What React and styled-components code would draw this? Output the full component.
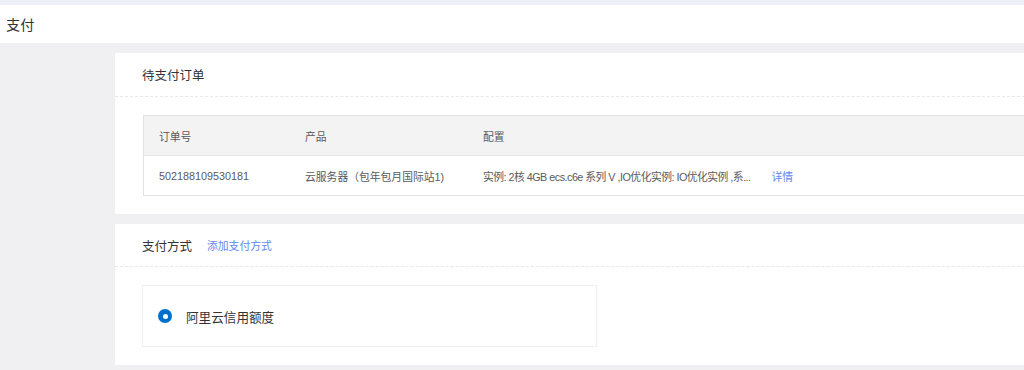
import React from "react";
import styled, { createGlobalStyle } from "styled-components";

const Global = createGlobalStyle`
  html, body { margin: 0; padding: 0; }
  body {
    background: #f0f0f2;
    overflow: hidden;
    font-family: "Liberation Sans", "Noto Sans CJK SC", sans-serif;
    color: #333;
  }
`;

const TopStrip = styled.div`
  height: 5px;
  background: #eceff5;
`;

const PageHeader = styled.div`
  height: 38px;
  background: #fff;
  padding-left: 6px;
  display: flex;
  align-items: center;
  font-size: 14.2px;
  color: #333;
`;

const Main = styled.div`
  padding: 10px 0 0 115px;
  display: flex;
  flex-direction: column;
  gap: 10px;
  width: 960px;
`;

const Card = styled.section`
  background: #fff;
  width: 960px;
`;

const CardHeader = styled.div`
  height: ${(p) => p.$h}px;
  box-sizing: border-box;
  display: flex;
  align-items: center;
  padding-left: 27px;
  border-bottom: 1px dashed #e8e8e8;
  gap: 15px;
`;

const CardTitle = styled.span`
  font-size: 12.5px;
  color: #333;
`;

const Link = styled.a`
  font-size: 10.8px;
  color: #6287f2;
  text-decoration: none;
  cursor: pointer;
`;

const CardBody = styled.div`
  padding: 18px 0 18px ${(p) => p.$left}px;
`;

const Table = styled.div`
  border: 1px solid #e2e2e2;
  border-right: none;
  font-size: 10.8px;
  color: #5a5a5a;
`;

const Row = styled.div`
  display: grid;
  grid-template-columns: 146px 178px 1fr;
  align-items: center;
  height: 39px;
  background: ${(p) => (p.$head ? "#f3f3f3" : "#fff")};
  border-bottom: ${(p) => (p.$head ? "1px solid #e6e6e6" : "none")};
`;

const Cell = styled.div`
  padding-left: 15px;
  white-space: nowrap;
  display: flex;
  align-items: center;
`;

const Config = styled.span`
  white-space: nowrap;
  letter-spacing: -0.52px;
  margin-right: 21px;
`;

const PayBox = styled.div`
  width: 455px;
  height: 62px;
  box-sizing: border-box;
  border: 1px solid #f0f0f0;
  box-shadow: 0 0 2px rgba(0, 0, 0, 0.03);
  display: flex;
  align-items: center;
  padding-left: 15px;
  gap: 14px;
  font-size: 12.6px;
  color: #333;
`;

const Radio = styled.span`
  width: 14px;
  height: 14px;
  border-radius: 50%;
  background: #0070cc;
  display: flex;
  align-items: center;
  justify-content: center;
  &::after {
    content: "";
    width: 5px;
    height: 5px;
    border-radius: 50%;
    background: #fff;
  }
`;

export default function App() {
  return (
    <>
      <Global />
      <TopStrip />
      <PageHeader>支付</PageHeader>
      <Main>
        <Card>
          <CardHeader $h={44}>
            <CardTitle>待支付订单</CardTitle>
          </CardHeader>
          <CardBody $left={28}>
            <Table>
              <Row $head>
                <Cell>订单号</Cell>
                <Cell>产品</Cell>
                <Cell>配置</Cell>
              </Row>
              <Row>
                <Cell>502188109530181</Cell>
                <Cell>云服务器（包年包月国际站1)</Cell>
                <Cell>
                  <Config>实例: 2核 4GB ecs.c6e 系列 V ,IO优化实例: IO优化实例 ,系...</Config>
                  <Link>详情</Link>
                </Cell>
              </Row>
            </Table>
          </CardBody>
        </Card>
        <Card>
          <CardHeader $h={43}>
            <CardTitle>支付方式</CardTitle>
            <Link>添加支付方式</Link>
          </CardHeader>
          <CardBody $left={27}>
            <PayBox>
              <Radio />
              阿里云信用额度
            </PayBox>
          </CardBody>
        </Card>
      </Main>
    </>
  );
}
